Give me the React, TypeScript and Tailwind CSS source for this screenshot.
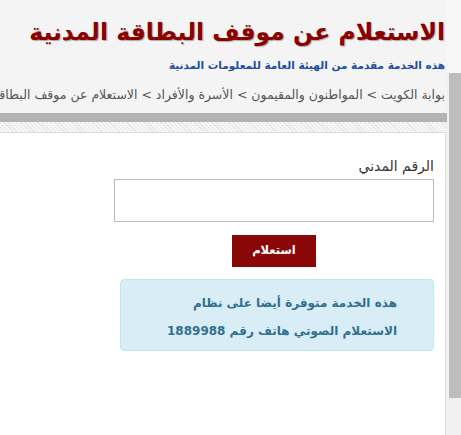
export default function App() {
  return (
    <div
      dir="rtl"
      className="w-[461px] h-[435px] overflow-hidden bg-[#f4f4f4] flex font-['DejaVu_Sans',sans-serif]"
    >
      {/* right strip (side rail) */}
      <div className="w-[14px] shrink-0 flex flex-col">
        <div className="h-[73px] bg-[#f7f7f7]" />
        <div className="flex-1 flex flex-col bg-[#f0f0f0]">
          <div className="w-[12px] h-[325px] bg-[#bdbdbd]" />
        </div>
      </div>

      <div className="w-[447px] shrink-0 flex flex-col">
        <div className="pr-[2px] pt-[12px]">
          <h1 className="text-[23.5px] leading-[40px] font-bold text-[#8b0000] whitespace-nowrap [text-shadow:1px_1px_1px_rgba(0,0,0,0.3)]">
            الاستعلام عن موقف البطاقة المدنية
          </h1>
          <p className="mt-[5px] text-[10.5px] leading-[16px] font-bold text-[#1c4fa3] whitespace-nowrap">
            هذه الخدمة مقدمة من الهيئة العامة للمعلومات المدنية
          </p>
          <p className="mt-[12px] text-[12.5px] leading-[20px] text-[#555555] whitespace-nowrap overflow-hidden">
            بوابة الكويت &gt; المواطنون والمقيمون &gt; الأسرة والأفراد &gt; الاستعلام عن موقف البطاقة المدنية
          </p>
        </div>

        <div className="mt-[8px] h-[9px] bg-[#b3b3b3]" />
        <div className="h-[10px] bg-[repeating-linear-gradient(45deg,#e6e6e6_0px,#e6e6e6_1px,#f7f7f7_1px,#f7f7f7_3px)]" />

        <div className="flex-1 bg-white border-t border-r border-[#dddddd] mr-[1px] pr-[11px] pt-[21px]">
          <div className="w-[320px]">
            <label className="block text-[14px] leading-[24px] text-[#333333]">
              الرقم المدني
            </label>
            <input
              type="text"
              className="mt-[1px] block w-[320px] h-[43px] border border-[#bbbbbb] bg-white outline-none"
            />
            <div className="mt-[13px] flex justify-center">
              <button className="w-[84px] h-[32px] bg-[#8a0707] text-white text-[11.5px] font-bold">
                استعلام
              </button>
            </div>
            <div className="mt-[12px] w-[314px] h-[72px] rounded-[4px] border border-[#bce8f1] bg-[#d9edf7] pr-[36px] pt-[9px] text-[12px] leading-[28px] font-bold text-[#31708f]">
              هذه الخدمة متوفرة أيضا على نظام
              <br />
              الاستعلام الصوتي هاتف رقم 1889988
            </div>
          </div>
        </div>
      </div>
    </div>
  );
}
